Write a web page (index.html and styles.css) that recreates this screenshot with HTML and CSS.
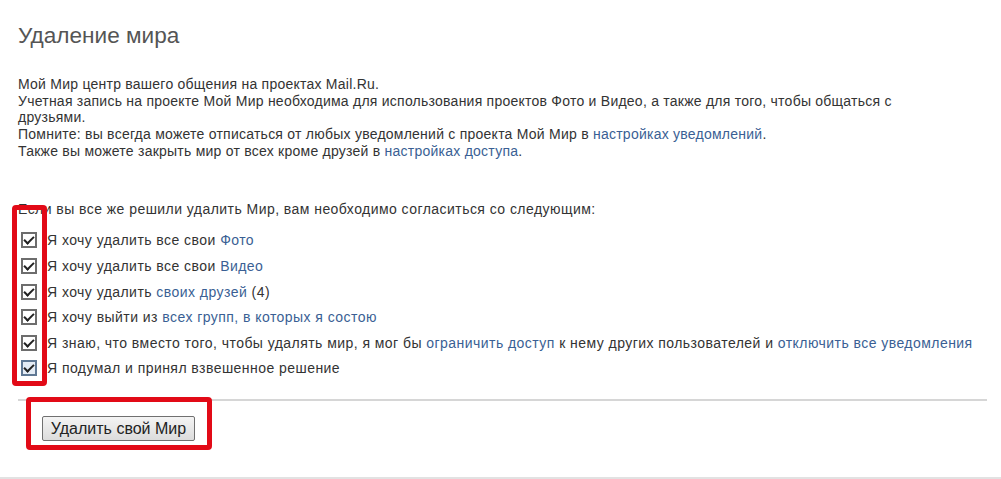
FILE: index.html
```html
<!DOCTYPE html>
<html lang="ru">

<head>
    <meta charset="UTF-8">
    <meta name="viewport" content="width=device-width, initial-scale=1.0">
    <title>Удаление мира</title>
    <link rel="stylesheet" href="styles.css">
</head>

<body>
    <div class="page">
        <h1 class="title">Удаление мира</h1>

        <p class="intro">
            Мой Мир центр вашего общения на проектах Mail.Ru.<br>
            Учетная запись на проекте Мой Мир необходима для использования проектов Фото и Видео, а также для того, чтобы общаться с<br>
            друзьями.<br>
            Помните: вы всегда можете отписаться от любых уведомлений с проекта Мой Мир в <a href="#">настройках уведомлений</a>.<br>
            Также вы можете закрыть мир от всех кроме друзей в <a href="#">настройках доступа</a>.
        </p>

        <p class="agree">Если вы все же решили удалить Мир, вам необходимо согласиться со следующим:</p>

        <div class="checks">
            <label class="check-row"><span class="box"></span><span>Я хочу удалить все свои <a href="#">Фото</a></span></label>
            <label class="check-row"><span class="box"></span><span>Я хочу удалить все свои <a href="#">Видео</a></span></label>
            <label class="check-row"><span class="box"></span><span>Я хочу удалить <a href="#">своих друзей</a> (4)</span></label>
            <label class="check-row"><span class="box"></span><span>Я хочу выйти из <a href="#">всех групп, в которых я состою</a></span></label>
            <label class="check-row"><span class="box"></span><span>Я знаю, что вместо того, чтобы удалять мир, я мог бы <a href="#">ограничить доступ</a> к нему других пользователей и <a href="#">отключить все уведомления</a></span></label>
            <label class="check-row"><span class="box focused"></span><span>Я подумал и принял взвешенное решение</span></label>
            <div class="mark mark-checks"></div>
        </div>

        <div class="actions">
            <button class="btn">Удалить свой Мир</button>
            <div class="mark mark-button"></div>
        </div>
    </div>
    <div class="footer-line"></div>
</body>

</html>
```

FILE: styles.css
```css
body {
    margin: 0;
    background: #fff;
    font-family: "Liberation Sans", Arial, sans-serif;
    color: #333;
}

a {
    color: #3a5f94;
    text-decoration: none;
}

.page {
    padding: 0 14px 0 18px;
    height: 477px;
}

.title {
    margin: 0;
    padding-top: 22px;
    font-size: 22.6px;
    font-weight: normal;
    line-height: 28px;
    color: #555;
}

.intro {
    margin: 26px 0 0;
    font-size: 14px;
    line-height: 16.7px;
    letter-spacing: 0.24px;
}

.agree {
    margin: 41px 0 0;
    font-size: 14px;
    line-height: 16px;
    letter-spacing: 0.45px;
}

.checks {
    position: relative;
    margin-top: 11px;
    padding-left: 3px;
    padding-bottom: 18px;
    border-bottom: 2px solid #d6d6d6;
}

.check-row {
    display: flex;
    align-items: center;
    height: 25.6px;
    font-size: 14px;
    letter-spacing: 0.45px;
    white-space: nowrap;
}

.box {
    position: relative;
    width: 12px;
    height: 12px;
    border: 2px solid #6d6d6d;
    background: #fff;
    margin-right: 10px;
    flex-shrink: 0;
}

.box::after {
    content: "";
    position: absolute;
    left: 3px;
    top: 0px;
    width: 4px;
    height: 8px;
    border-right: 2px solid #222;
    border-bottom: 2px solid #222;
    transform: rotate(45deg);
}

.box.focused {
    border-color: #5f7894;
    background: #e4ecf5;
}

.actions {
    position: relative;
    padding: 15px 0 0 24px;
}

.btn {
    font-family: "Liberation Sans", Arial, sans-serif;
    font-size: 16px;
    color: #222;
    width: 153px;
    height: 25px;
    padding: 0;
    border: 1px solid #707070;
    border-radius: 2px;
    background: linear-gradient(#f4f4f4, #dcdcdc);
}

.mark {
    position: absolute;
    border: 5px solid #e20a17;
    border-radius: 4px;
}

.mark-checks {
    left: -6px;
    top: -23px;
    width: 25px;
    height: 171px;
}

.mark-button {
    left: 8px;
    top: -4px;
    width: 176px;
    height: 43px;
}

.footer-line {
    border-top: 2px solid #e2e2e2;
}
```
